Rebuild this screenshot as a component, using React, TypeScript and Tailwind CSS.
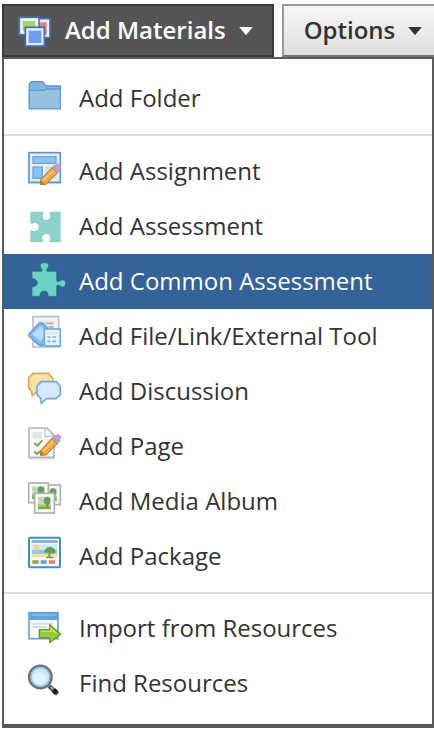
import type { ReactNode } from "react";

function Icon({ children }: { children: ReactNode }) {
  return (
    <svg
      viewBox="0 -12 105 129"
      className="h-[43px] w-[35px] shrink-0 overflow-visible"
      aria-hidden="true"
    >
      {children}
    </svg>
  );
}

function Caret() {
  return (
    <svg viewBox="0 0 16 10" className="h-[10px] w-4 shrink-0" fill="currentColor" aria-hidden="true">
      <path d="M1.2 1h13.6L8.6 8.6a.8.8 0 0 1-1.2 0z" />
    </svg>
  );
}

function MaterialsIcon() {
  return (
    <svg viewBox="0 -6 102 102" className="size-[34px] shrink-0" aria-hidden="true">
      <rect x="44" y="8" width="52" height="57" fill="#f4e9ee" stroke="#3f74b8" strokeWidth="5" />
      <rect x="56" y="19" width="30" height="38" fill="#e87a78" />
      <rect x="4" y="4" width="59" height="52" fill="#eef6ee" stroke="#4079ba" strokeWidth="5" />
      <rect x="14" y="15" width="38" height="31" fill="#a5d66a" />
      <rect x="22" y="34" width="57" height="56" fill="#e6eefc" stroke="#3b6fc0" strokeWidth="5" />
      <rect x="32" y="44" width="38" height="37" fill="#6c9df6" />
    </svg>
  );
}

function Pencil() {
  return (
    <g>
      <path d="M38 77L72 41l16 16L54 91l-17 1z" fill="#f2a945" stroke="#b67627" strokeWidth="3" />
      <path d="M45 80L77 49" stroke="#ffc873" strokeWidth="5" />
      <path d="M37 92l1-13 14 12z" fill="#bd7c34" />
      <path d="M72 41l9-9 16 16-9 9z" fill="#a9adb2" stroke="#8c9298" strokeWidth="2" />
      <path d="M80 35q5-8 13-6 8 4 6 12l-6 9z" fill="#d696cd" />
    </g>
  );
}

function FolderIcon() {
  return (
    <Icon>
      <path d="M4 83V8l6-6h33l12 13h42v68z" fill="#7fb7e2" stroke="#5898d2" strokeWidth="4" />
      <path d="M4 28h46l6-4h41v59H4z" fill="#96c2e0" stroke="#5c9fd6" strokeWidth="4" />
    </Icon>
  );
}

function AssignmentIcon() {
  return (
    <Icon>
      <path d="M0 88h98" stroke="#d5dbe1" strokeWidth="5" />
      <rect x="3" y="-4" width="94" height="89" fill="#e6f0fa" stroke="#5b96d0" strokeWidth="5" />
      <rect x="15" y="8" width="69" height="20" fill="#8ec2ef" stroke="#6aa5dc" strokeWidth="4" />
      <rect x="15" y="39" width="28" height="34" fill="#8cc0f0" stroke="#6aa5dc" strokeWidth="4" />
      <rect x="52" y="37" width="36" height="37" fill="#dcdddf" />
      <Pencil />
    </Icon>
  );
}

function AssessmentIcon() {
  return (
    <Icon>
      <path
        d="M7 8h38c4 5-2 10-1 15 1 13 22 13 23 0 1-5-5-10-1-15h32v92H66c-4-5 3-9 1-16-3-12-21-12-24 0-2 7 5 11 1 16H7V65c5-4 8 2 15 1 14-2 14-21 0-24-6-1-10 5-15 1z"
        fill="#8bd2cb"
      />
    </Icon>
  );
}

function CommonAssessmentIcon() {
  return (
    <Icon>
      <path
        d="M12 22h26c7 0 5-5 1-10-6-8-1-16 10-16s17 8 10 16c-4 5-5 10 1 10h26v26c0 7 6 6 11 2 8-5 16-1 16 8 0 10-9 14-16 8-5-4-11-5-11 2v29H63c-5 0-2-6-3-9-4-9-19-9-23 0-1 3 1 9-4 9H12V72c0-5 6-3 10-6 8-5 8-15 0-20-4-3-10-1-10-6z"
        fill="#6bd3c3"
        stroke="#25708a"
        strokeWidth="2"
      />
    </Icon>
  );
}

function FileLinkIcon() {
  return (
    <Icon>
      <rect x="15" y="-7" width="77" height="91" fill="#f4f4f3" stroke="#bfc1c2" strokeWidth="5" />
      <path d="M27 5h52v58H27z" fill="#e3e5e5" />
      <path d="M54 13h22M62 24h14" stroke="#a7abad" strokeWidth="4" />
      <path
        d="M2 46l29-31q8-6 16 0l13 14v36L46 77q-7 5-15 0L2 50z"
        fill="#7fb9f2"
        stroke="#5c9fe2"
        strokeWidth="4"
        strokeLinejoin="round"
      />
      <path d="M12 46l26-25 16 16v11L37 67z" fill="#b7dbfc" />
      <rect x="49" y="30" width="48" height="51" fill="#e8f3fe" stroke="#6fa9e0" strokeWidth="5" />
      <path d="M58 43h30" stroke="#d5e7f9" strokeWidth="6" />
      <path d="M58 54h10m5 0h11M58 67h10m5 0h11" stroke="#80b3e3" strokeWidth="5" />
    </Icon>
  );
}

function DiscussionIcon() {
  return (
    <Icon>
      <path
        d="M15-2h46l13 14v30L61 55H23L13 66l-2-14-9-11V12z"
        fill="#f9dfa0"
        stroke="#dca75d"
        strokeWidth="5"
        strokeLinejoin="round"
      />
      <path d="M18 7h38" stroke="#ffedbc" strokeWidth="6" />
      <path
        d="M40 23h44l13 13v26L84 74H56L39 88V74l-12-12V36z"
        fill="#d4e9fd"
        stroke="#71a9dc"
        strokeWidth="5"
        strokeLinejoin="round"
      />
    </Icon>
  );
}

function PageIcon() {
  return (
    <Icon>
      <path d="M2 90h78" stroke="#dedede" strokeWidth="4" />
      <path d="M3-3h54l21 22v66H3z" fill="#f8f9f9" stroke="#b2b5b6" strokeWidth="5" />
      <path d="M14 9h27v19H14z" fill="#e1e5e8" />
      <path d="M51 0v22h24" fill="#fff" stroke="#c1c3c4" strokeWidth="4" />
      <path d="M19 42l9 8 15-16M19 67l8 8 9-8" fill="none" stroke="#70ad49" strokeWidth="6" />
      <g transform="translate(0 -13)">
        <Pencil />
      </g>
    </Icon>
  );
}

function Photo({ x, y }: { x: number; y: number }) {
  return (
    <g transform={`translate(${x} ${y})`}>
      <rect x="2" y="2" width="59" height="59" fill="#fafafa" stroke="#aeb1b2" strokeWidth="5" />
      <rect x="12" y="12" width="38" height="23" fill="#b4dcf5" />
      <rect x="12" y="35" width="38" height="15" fill="#9bc65c" />
      <circle cx="18" cy="19" r="6" fill="#f5c866" />
      <path d="M37 30h6v15h-6z" fill="#987948" />
      <ellipse cx="39" cy="24" rx="10" ry="12" fill="#6aa151" />
      <path d="M12 46h38" stroke="#76a44b" strokeWidth="5" />
    </g>
  );
}

function MediaAlbumIcon() {
  return (
    <Icon>
      <Photo x={36} y={1} />
      <Photo x={0} y={-5} />
      <Photo x={18} y={26} />
    </Icon>
  );
}

function PackageIcon() {
  return (
    <Icon>
      <rect x="3" y="-4" width="93" height="89" rx="3" fill="#f8fcff" stroke="#468bc4" strokeWidth="6" />
      <rect x="11" y="3" width="78" height="9" fill="#81b4dd" />
      <rect x="12" y="16" width="75" height="16" fill="#cbeafd" />
      <rect x="12" y="32" width="75" height="14" fill="#92c9f3" />
      <rect x="12" y="46" width="75" height="9" fill="#fbe08a" />
      <circle cx="26" cy="25" r="8" fill="#f6d66d" />
      <path d="M61 36h6v17h10v5H54v-5h7z" fill="#7a9b51" />
      <path d="M48 38l8-12 11-3 14 7 2 10-10 5-10-5-9 2z" fill="#699c4c" />
      <path d="M13 69h19" stroke="#8bac38" strokeWidth="11" />
      <path d="M38 69h18" stroke="#5fa4dc" strokeWidth="11" />
      <path d="M62 69h19" stroke="#e88752" strokeWidth="11" />
    </Icon>
  );
}

function ImportIcon() {
  return (
    <Icon>
      <rect x="3" y="5" width="87" height="78" fill="#f7f9fb" stroke="#6ca2d6" strokeWidth="5" />
      <rect x="3" y="5" width="87" height="22" fill="#62a4e0" />
      <path d="M12 12h70" stroke="#84bdf0" strokeWidth="5" />
      <path d="M14 38h61M14 48h42" stroke="#d8dbde" strokeWidth="6" />
      <path d="M34 56h31V41l33 28-33 26V81H34z" fill="#98c83b" stroke="#699b26" strokeWidth="4" strokeLinejoin="round" />
      <path d="M39 61h30V52l17 16" fill="none" stroke="#c0e363" strokeWidth="4" />
    </Icon>
  );
}

function FindIcon() {
  return (
    <Icon>
      <path d="M63 60l26 24" stroke="#4a4c4e" strokeWidth="13" />
      <path d="M68 63l7 7" stroke="#a8abad" strokeWidth="5" />
      <path d="M77 72l8 9" stroke="#17191b" strokeWidth="15" />
      <circle cx="37" cy="33" r="34" fill="#b3ddf5" stroke="#6d7276" strokeWidth="7" />
      <circle cx="37" cy="33" r="28" fill="#c6e8fb" stroke="#7ebadd" strokeWidth="3" />
      <ellipse cx="35" cy="37" rx="18" ry="19" fill="#e0f4ff" />
    </Icon>
  );
}

type Item = { label: string; icon: ReactNode; active?: boolean };

const folderItems: Item[] = [{ label: "Add Folder", icon: <FolderIcon /> }];

const materialItems: Item[] = [
  { label: "Add Assignment", icon: <AssignmentIcon /> },
  { label: "Add Assessment", icon: <AssessmentIcon /> },
  { label: "Add Common Assessment", icon: <CommonAssessmentIcon />, active: true },
  { label: "Add File/Link/External Tool", icon: <FileLinkIcon /> },
  { label: "Add Discussion", icon: <DiscussionIcon /> },
  { label: "Add Page", icon: <PageIcon /> },
  { label: "Add Media Album", icon: <MediaAlbumIcon /> },
  { label: "Add Package", icon: <PackageIcon /> },
];

const resourceItems: Item[] = [
  { label: "Import from Resources", icon: <ImportIcon /> },
  { label: "Find Resources", icon: <FindIcon /> },
];

function MenuGroup({ items, className }: { items: Item[]; className: string }) {
  return (
    <ul className={className}>
      {items.map((item) => (
        <li key={item.label}>
          <button
            type="button"
            className={`flex h-[55px] w-full items-center gap-4 pl-6 text-left whitespace-nowrap ${
              item.active ? "bg-[#336399] text-white" : "text-[#333]"
            }`}
          >
            {item.icon}
            <span className="pb-0.5">{item.label}</span>
          </button>
        </li>
      ))}
    </ul>
  );
}

export default function App() {
  return (
    <div className="overflow-hidden bg-white pt-1 pb-px pl-0.5 font-['Open_Sans','Noto_Sans',sans-serif] text-2xl">
      <div className="flex gap-2 font-semibold whitespace-nowrap">
        <button
          type="button"
          aria-expanded="true"
          className="flex h-[53px] shrink-0 items-center gap-3 border-2 border-[#3a3a3a] bg-[#555] pr-[18px] pl-3.5 text-white"
        >
          <MaterialsIcon />
          <span className="pb-0.5 pl-px">Add Materials</span>
          <Caret />
        </button>
        <button
          type="button"
          className="flex h-[53px] shrink-0 items-center gap-3 border-2 border-[#999] border-b-[#777] bg-linear-to-b from-[#f7f7f7] to-[#dedede] px-5 text-[#333]"
        >
          <span className="pb-0.5">Options</span>
          <Caret />
        </button>
      </div>
      <nav aria-label="Add Materials" className="border-2 border-b-4 border-[#5a5a5a] bg-white">
        <MenuGroup items={folderItems} className="pt-3 pb-2" />
        <MenuGroup items={materialItems} className="border-y-2 border-[#dcdcdc] py-2" />
        <MenuGroup items={resourceItems} className="pt-[7px] pb-[13px]" />
      </nav>
    </div>
  );
}
